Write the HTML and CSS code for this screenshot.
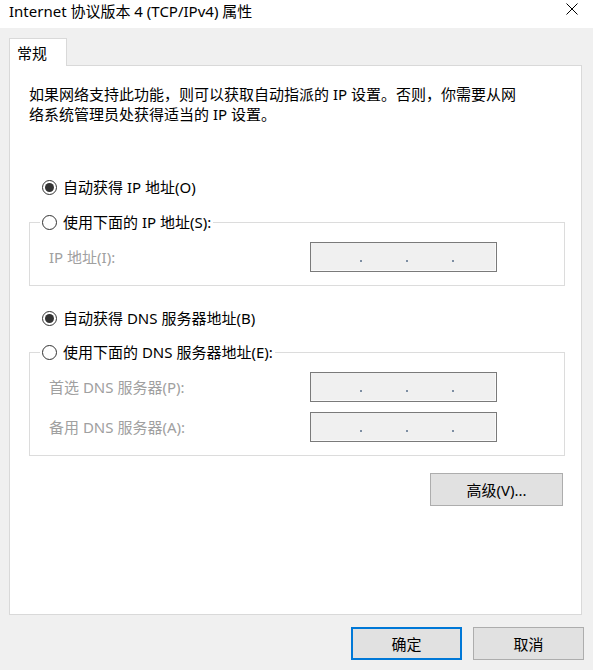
FILE: index.html
```html
<!DOCTYPE html>
<html lang="zh-CN">
<head>
<meta charset="utf-8">
<title>Internet 协议版本 4 (TCP/IPv4) 属性</title>
<link rel="stylesheet" href="styles.css">
</head>
<body>
<div class="window">
  <div class="titlebar">
    <span class="title">Internet 协议版本 4 (TCP/IPv4) 属性</span>
    <svg class="close" width="12" height="12" viewBox="0 0 12 12"><path d="M0.5 0.5 L11.5 11.5 M11.5 0.5 L0.5 11.5" stroke="#000" stroke-width="1" fill="none"/></svg>
  </div>
  <div class="content">
    <div class="tabs"><div class="tab">常规</div></div>
    <div class="panel">
      <p class="intro">如果网络支持此功能，则可以获取自动指派的 IP 设置。否则，你需要从网<br>络系统管理员处获得适当的 IP 设置。</p>

      <label class="radio radio-first"><span class="dot checked"></span>自动获得 IP 地址(O)</label>
      <fieldset class="group group-ip">
        <legend><label class="radio"><span class="dot"></span>使用下面的 IP 地址(S):</label></legend>
        <div class="field"><span class="field-label">IP 地址(I):</span><div class="ipbox"><i></i><i></i><i></i></div></div>
      </fieldset>

      <label class="radio radio-dns"><span class="dot checked"></span>自动获得 DNS 服务器地址(B)</label>
      <fieldset class="group group-dns">
        <legend><label class="radio"><span class="dot"></span>使用下面的 DNS 服务器地址(E):</label></legend>
        <div class="field"><span class="field-label">首选 DNS 服务器(P):</span><div class="ipbox"><i></i><i></i><i></i></div></div>
        <div class="field"><span class="field-label">备用 DNS 服务器(A):</span><div class="ipbox"><i></i><i></i><i></i></div></div>
      </fieldset>

      <div class="actions"><button class="btn btn-adv">高级(V)...</button></div>
    </div>
    <div class="footer">
      <button class="btn btn-dlg primary">确定</button>
      <button class="btn btn-dlg">取消</button>
    </div>
  </div>
</div>
</body>
</html>
```

FILE: styles.css
```css
* { box-sizing: border-box; }
html, body { margin: 0; padding: 0; }
body {
  width: 593px;
  height: 670px;
  overflow: hidden;
  background: #f0f0f0;
  font-family: "Noto Sans", "Noto Sans CJK SC", sans-serif;
  font-size: 15px;
  color: #000;
}
.titlebar {
  height: 28px;
  background: #fff;
  display: flex;
  align-items: flex-start;
  justify-content: space-between;
  padding: 0 15px 0 9px;
}
.title {
  line-height: 20px;
  padding-top: 1px;
  font-size: 15px;
}
.close { margin-top: 3px; display: block; }

.content { padding: 10px 11px 0 9px; }

.tabs { display: flex; }
.tab {
  position: relative;
  z-index: 1;
  width: 58px;
  height: 28px;
  margin-bottom: -1px;
  background: #fff;
  border: 1px solid #d9d9d9;
  border-bottom: none;
  display: flex;
  align-items: center;
  padding-left: 7px;
  line-height: 20px;
}

.panel {
  width: 573px;
  height: 550px;
  background: #fff;
  border: 1px solid #d9d9d9;
  display: flex;
  flex-direction: column;
}
.intro {
  margin: 18px 0 0 19px;
  line-height: 20px;
}

.radio {
  display: flex;
  align-items: center;
  gap: 6px;
  height: 20px;
  line-height: 20px;
  white-space: nowrap;
}
.dot {
  width: 15px;
  height: 15px;
  border: 1px solid #333;
  border-radius: 50%;
  background: #fff;
  display: flex;
  align-items: center;
  justify-content: center;
  flex: none;
}
.dot.checked::after {
  content: "";
  width: 9px;
  height: 9px;
  border-radius: 50%;
  background: #333;
}
.radio-first { margin: 53px 0 0 32px; }
.radio-dns { margin: 22px 0 0 32px; }

.group {
  margin: 15px 0 0 19px;
  width: 536px;
  min-width: 0;
  border: 1px solid #dcdcdc;
  padding: 10px 0 13px 0;
  display: flex;
  flex-direction: column;
  gap: 10px;
}
.group-dns { margin-top: 14px; }
.group legend {
  margin-left: 10px;
  padding: 0 2px;
  height: 20px;
}
.field {
  display: flex;
  align-items: center;
  padding-left: 19px;
}
.field-label {
  width: 261px;
  color: #a0a0a0;
  line-height: 20px;
}
.ipbox {
  width: 187px;
  height: 30px;
  border: 1px solid #7a7a7a;
  background: #f0f0f0;
  box-shadow: inset -1px -1px 0 #fafafa;
  display: flex;
  align-items: flex-start;
  gap: 44px;
  padding: 17px 0 0 49px;
}
.ipbox i {
  width: 2px;
  height: 2px;
  background: #7d8ea3;
  display: block;
}

.actions {
  display: flex;
  justify-content: flex-end;
  padding-right: 18px;
  margin-top: 17px;
}
.btn {
  font-family: inherit;
  font-size: 15px;
  color: #000;
  background: #e1e1e1;
  border: 1px solid #adadad;
  border-radius: 0;
  padding: 0;
  line-height: 20px;
}
.btn-adv { width: 133px; height: 33px; }

.footer {
  display: flex;
  justify-content: flex-end;
  gap: 11px;
  margin-top: 12px;
  margin-right: -2px;
}
.btn-dlg { width: 111px; height: 33px; }
.btn.primary { border: 2px solid #0078d7; }
```
